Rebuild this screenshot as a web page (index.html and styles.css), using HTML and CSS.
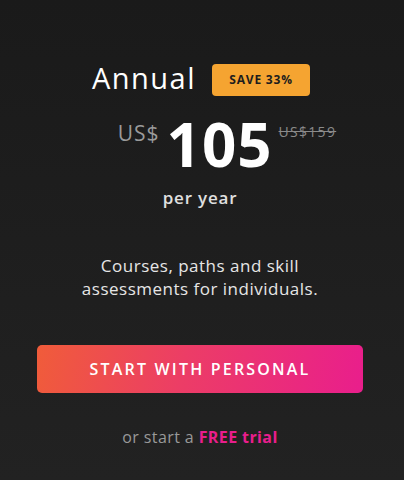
FILE: index.html
```html
<!DOCTYPE html>
<html>
<head>
<meta charset="utf-8">
<link rel="stylesheet" href="styles.css">
</head>
<body>
<main class="card">
  <div class="title-row">
    <h1 class="title">Annual</h1>
    <span class="badge">SAVE 33%</span>
  </div>
  <div class="price-row">
    <span class="currency">US$</span>
    <span class="amount">105</span>
    <span class="old-price">US$159</span>
  </div>
  <div class="period">per year</div>
  <p class="desc">Courses, paths and skill<br>assessments for individuals.</p>
  <button class="cta">START WITH PERSONAL</button>
  <p class="trial">or start a <a class="trial-link">FREE trial</a></p>
</main>
</body>
</html>
```
FILE: styles.css
```css
html, body {
  margin: 0;
  padding: 0;
}
body {
  width: 404px;
  height: 480px;
  background: linear-gradient(180deg, #1a1a1a 0%, #222222 100%);
  font-family: "Open Sans", "Noto Sans", sans-serif;
  color: #fff;
  overflow: hidden;
}
.card {
  display: flex;
  flex-direction: column;
  align-items: center;
  padding-top: 58px;
  padding-right: 4px;
}
.title-row {
  display: flex;
  align-items: center;
  gap: 16px;
  margin-left: 2px;
}
.title {
  margin: 0 0 4px;
  font-size: 29px;
  font-weight: 400;
  line-height: 40px;
  letter-spacing: 1.5px;
}
.badge {
  display: inline-block;
  width: 98px;
  height: 32px;
  line-height: 32px;
  text-align: center;
  background: #f5a431;
  color: #1d1d1d;
  border-radius: 4px;
  font-size: 12px;
  font-weight: 700;
  letter-spacing: 0.8px;
}
.price-row {
  display: flex;
  align-items: flex-start;
  margin-top: 17px;
  margin-left: 54px;
  height: 56px;
}
.currency {
  font-size: 21px;
  color: #9a9a9a;
  line-height: 30px;
  margin-top: -1px;
  letter-spacing: 1px;
}
.amount {
  font-size: 60px;
  font-weight: 700;
  line-height: 50px;
  margin-left: 7px;
  letter-spacing: 1px;
}
.old-price {
  font-size: 14px;
  color: #8a8a8a;
  text-decoration: line-through;
  line-height: 30px;
  margin-left: 6px;
  margin-top: -2px;
  letter-spacing: 1.3px;
}
.period {
  margin-top: 11px;
  font-size: 17px;
  font-weight: 600;
  color: #e0e0e0;
  letter-spacing: 0.8px;
}
.desc {
  margin: 45px 0 0;
  font-size: 17px;
  line-height: 23px;
  text-align: center;
  color: #e6e6e6;
  letter-spacing: 0.5px;
}
.cta {
  margin-top: 45px;
  width: 326px;
  height: 48px;
  padding: 0;
  border: none;
  border-radius: 5px;
  background: linear-gradient(100deg, #f05c3a 0%, #ec3d66 45%, #e91e8c 100%);
  color: #fff;
  font-family: inherit;
  font-size: 16px;
  font-weight: 600;
  letter-spacing: 2.2px;
}
.trial {
  margin: 33px 0 0;
  font-size: 16px;
  color: #999;
  letter-spacing: 0.4px;
}
.trial-link {
  color: #e91e8c;
  font-weight: 700;
}
```
